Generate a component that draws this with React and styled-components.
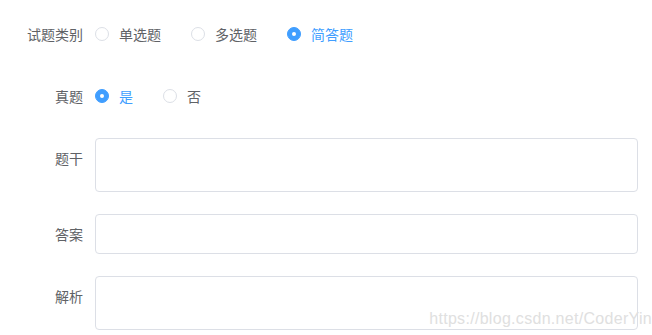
import React, { useState } from 'react';
import styled, { createGlobalStyle } from 'styled-components';

const GlobalStyle = createGlobalStyle`
  html, body {
    margin: 0;
    padding: 0;
    background: #fff;
  }
  body {
    font-family: "Noto Sans CJK SC", "Noto Sans", sans-serif;
  }
`;

const typeOptions = ['单选题', '多选题', '简答题'];
const realOptions = ['是', '否'];

const App = () => {
  const [type, setType] = useState('简答题');
  const [real, setReal] = useState('是');

  return (
    <Page>
      <GlobalStyle />
      <Form>
        <FormItem>
          <Label>试题类别</Label>
          <Content>
            <RadioGroup>
              {typeOptions.map((opt) => (
                <Radio key={opt} onClick={() => setType(opt)}>
                  <RadioInner checked={type === opt} />
                  <RadioText checked={type === opt}>{opt}</RadioText>
                </Radio>
              ))}
            </RadioGroup>
          </Content>
        </FormItem>

        <FormItem>
          <Label>真题</Label>
          <Content>
            <RadioGroup>
              {realOptions.map((opt) => (
                <Radio key={opt} onClick={() => setReal(opt)}>
                  <RadioInner checked={real === opt} />
                  <RadioText checked={real === opt}>{opt}</RadioText>
                </Radio>
              ))}
            </RadioGroup>
          </Content>
        </FormItem>

        <FormItem>
          <Label>题干</Label>
          <Content>
            <TextArea />
          </Content>
        </FormItem>

        <FormItem>
          <Label>答案</Label>
          <Content>
            <Input />
          </Content>
        </FormItem>

        <FormItem>
          <Label>解析</Label>
          <Content>
            <TextArea />
          </Content>
        </FormItem>
      </Form>
      <Watermark>https://blog.csdn.net/CoderYin</Watermark>
    </Page>
  );
};

export default App;

const Page = styled.div`
  position: relative;
  width: 652px;
  height: 335px;
  overflow: hidden;
  background: #fff;
`;

const Form = styled.form`
  display: flex;
  flex-direction: column;
  gap: 22px;
  padding: 14px 14px 0 0;
`;

const FormItem = styled.div`
  display: flex;
  align-items: flex-start;
`;

const Label = styled.label`
  width: 95px;
  flex-shrink: 0;
  box-sizing: border-box;
  padding-right: 12px;
  text-align: right;
  font-size: 14px;
  line-height: 40px;
  color: #606266;
`;

const Content = styled.div`
  flex: 1;
  min-height: 40px;
  display: flex;
  align-items: center;
`;

const RadioGroup = styled.div`
  display: flex;
  align-items: center;
  height: 40px;
`;

const Radio = styled.span`
  display: inline-flex;
  align-items: center;
  margin-right: 30px;
  cursor: pointer;
`;

const RadioInner = styled.span`
  position: relative;
  width: 14px;
  height: 14px;
  box-sizing: border-box;
  border-radius: 50%;
  border: 1px solid ${(p) => (p.checked ? '#409EFF' : '#DCDFE6')};
  background: ${(p) => (p.checked ? '#409EFF' : '#fff')};

  &::after {
    content: '';
    position: absolute;
    left: 50%;
    top: 50%;
    width: 4px;
    height: 4px;
    border-radius: 50%;
    background: #fff;
    transform: translate(-50%, -50%);
    display: ${(p) => (p.checked ? 'block' : 'none')};
  }
`;

const RadioText = styled.span`
  padding-left: 10px;
  font-size: 14px;
  line-height: 1;
  color: ${(p) => (p.checked ? '#409EFF' : '#606266')};
`;

const TextArea = styled.textarea`
  display: block;
  width: 100%;
  height: 54px;
  box-sizing: border-box;
  padding: 5px 15px;
  border: 1px solid #DCDFE6;
  border-radius: 4px;
  resize: none;
  outline: none;
  font-family: inherit;
  font-size: 14px;
  color: #606266;
`;

const Input = styled.input`
  display: block;
  width: 100%;
  height: 40px;
  box-sizing: border-box;
  padding: 0 15px;
  border: 1px solid #DCDFE6;
  border-radius: 4px;
  outline: none;
  font-family: inherit;
  font-size: 14px;
  color: #606266;
`;

const Watermark = styled.div`
  position: absolute;
  right: 0;
  bottom: 7px;
  font-family: "Liberation Sans", Arial, sans-serif;
  font-size: 16px;
  letter-spacing: 0.3px;
  color: #e0e0e0;
  pointer-events: none;
  white-space: nowrap;
`;
